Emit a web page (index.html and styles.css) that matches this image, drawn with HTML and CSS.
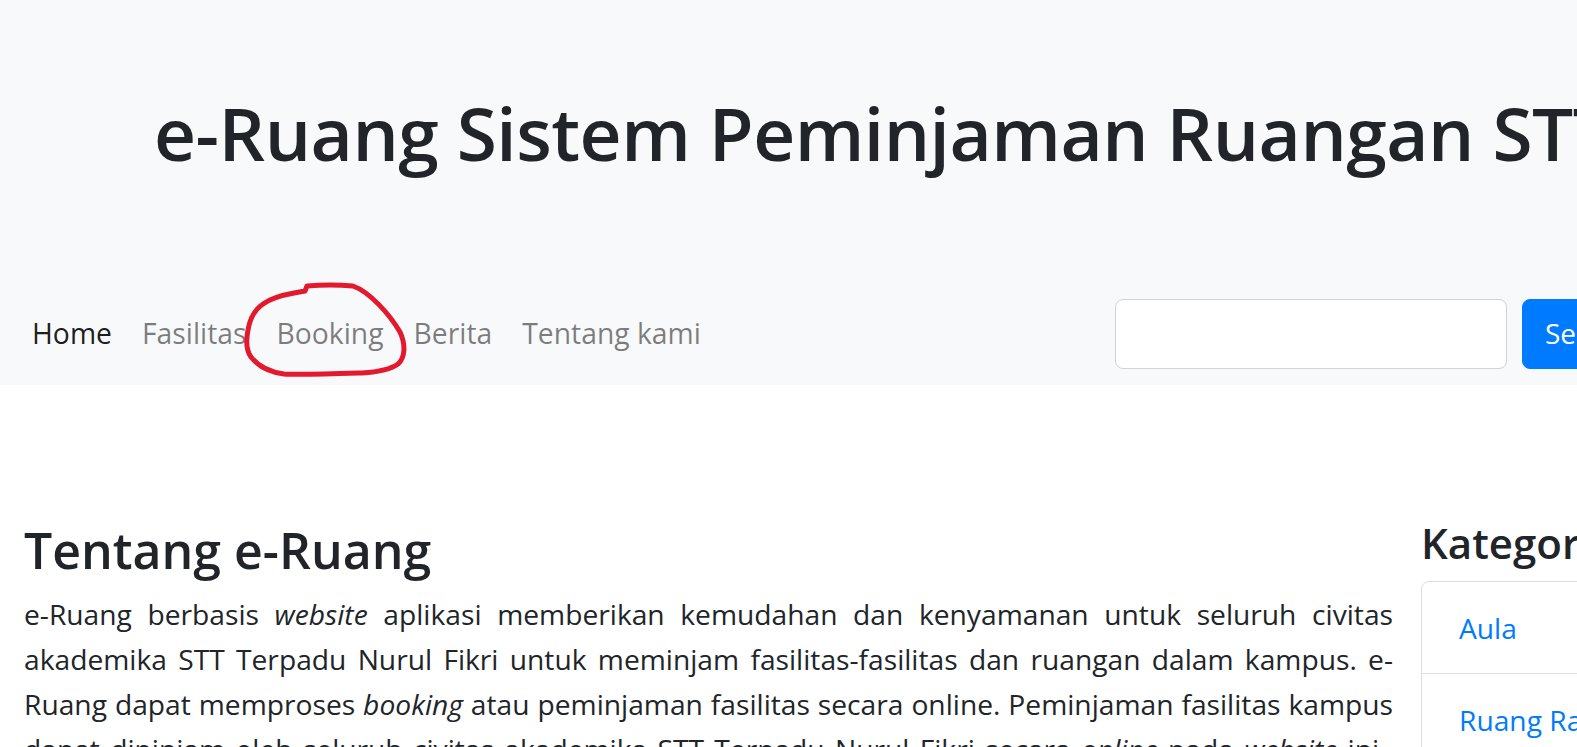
FILE: index.html
```html
<!DOCTYPE html>
<html lang="id">
<head>
<meta charset="utf-8">
<title>e-Ruang</title>
<link rel="stylesheet" href="styles.css">
</head>
<body>
<header class="masthead">
  <div class="hero">
    <h1 class="hero-title">e-Ruang Sistem Peminjaman Ruangan STT Terpadu Nurul Fikri</h1>
  </div>
  <nav class="navbar">
    <ul class="nav-links">
      <li><a class="nav-link active" href="#">Home</a></li>
      <li><a class="nav-link" href="#">Fasilitas</a></li>
      <li><a class="nav-link" href="#">Booking</a></li>
      <li><a class="nav-link" href="#">Berita</a></li>
      <li><a class="nav-link" href="#">Tentang kami</a></li>
    </ul>
    <form class="search">
      <input class="search-input" type="search" aria-label="Search">
      <button class="search-btn" type="button">Search</button>
    </form>
  </nav>
</header>
<main class="content">
  <section class="about">
    <h3 class="about-title">Tentang e-Ruang</h3>
    <p class="about-text"><span class="jl">e-Ruang berbasis <i>website</i> aplikasi memberikan kemudahan dan kenyamanan untuk seluruh civitas</span><span class="jl">akademika STT Terpadu Nurul Fikri untuk meminjam fasilitas-fasilitas dan ruangan dalam kampus. e-</span><span class="jl">Ruang dapat memproses <i>booking</i> atau peminjaman fasilitas secara online. Peminjaman fasilitas kampus</span><span class="tail">dapat dipinjam oleh seluruh civitas akademika STT Terpadu Nurul Fikri secara <i>online</i> pada <i>website</i> ini.</span></p>
  </section>
  <aside class="sidebar">
    <h4 class="sidebar-title">Kategori</h4>
    <ul class="list-group">
      <li class="list-item"><a href="#">Aula</a></li>
      <li class="list-item"><a href="#">Ruang Rapat</a></li>
      <li class="list-item"><a href="#">Laboratorium</a></li>
    </ul>
  </aside>
</main>
<svg class="annotation" width="1577" height="747" viewBox="0 0 1577 747" aria-hidden="true">
  <path d="M305 291 L307 286 C320 285 340 285 353 286 C370 292 390 315 400 332 C406 345 405 358 398 364 C390 370 378 372 362 373 C330 374 300 375 284 374 C270 372 258 366 251 357 C246 350 246 340 248 330 C250 318 254 310 263 304 C271 298 283 295 294 293 L305 291" fill="none" stroke="#e3192e" stroke-width="5" stroke-linecap="round" stroke-linejoin="round"/>
</svg>
</body>
</html>
```
FILE: styles.css
```css
* { box-sizing: border-box; }
html { overflow: hidden; }
body {
  margin: 0;
  width: 1880px;
  font-family: "Open Sans", sans-serif;
  font-size: 28.2px;
  line-height: 45px;
  color: #212529;
  background: #fff;
}
.masthead { background: #f8f9fa; }
.hero { height: 282px; padding: 88px 0 0 154px; }
.hero-title {
  margin: 0;
  font-size: 73px;
  font-weight: 600;
  letter-spacing: -0.5px;
  line-height: 90px;
  white-space: nowrap;
}
.navbar {
  height: 103px;
  padding: 0 30px 0 32px;
  display: grid;
  grid-template-columns: 1083px auto;
  align-items: center;
}
.nav-links { list-style: none; margin: 0; padding: 0; display: flex; gap: 30px; }
.nav-link { color: rgba(0,0,0,.5); text-decoration: none; font-size: 28.3px; line-height: 45px; }
.nav-link.active { color: rgba(0,0,0,.9); }
.search { display: flex; gap: 15px; align-items: center; }
.search-input {
  width: 392px; height: 70px;
  border: 1px solid #ced4da; border-radius: 8px;
  background: #fff; font: inherit; padding: 0 22px;
}
.search-btn {
  height: 70px; padding: 0 22px;
  border: 1px solid #007bff; border-radius: 8px;
  background: #007bff; color: #fff; font: inherit; font-size: 28px;
}
.content { display: flex; padding: 136px 0 0 24px; align-items: flex-start; }
.about { width: 1369px; }
.about-title { margin: 0 0 12px; font-size: 50px; font-weight: 600; line-height: 59px; }
.about-text { margin: 0; text-align: justify; }
.jl { display: block; text-align-last: justify; }
.tail { word-spacing: 3px; }
.sidebar { margin-left: 28px; width: 440px; }
.sidebar-title { margin: 0 0 16px; font-size: 42px; font-weight: 600; line-height: 44px; white-space: nowrap; }
.list-group { list-style: none; margin: 0; padding: 0; border: 1px solid rgba(0,0,0,.125); border-radius: 8px; }
.list-item { padding: 24px 37px 22px; border-bottom: 1px solid rgba(0,0,0,.125); }
.list-item:last-child { border-bottom: 0; }
.list-item a { color: #007bff; text-decoration: none; }
.annotation { position: absolute; top: 0; left: 0; pointer-events: none; }
```
